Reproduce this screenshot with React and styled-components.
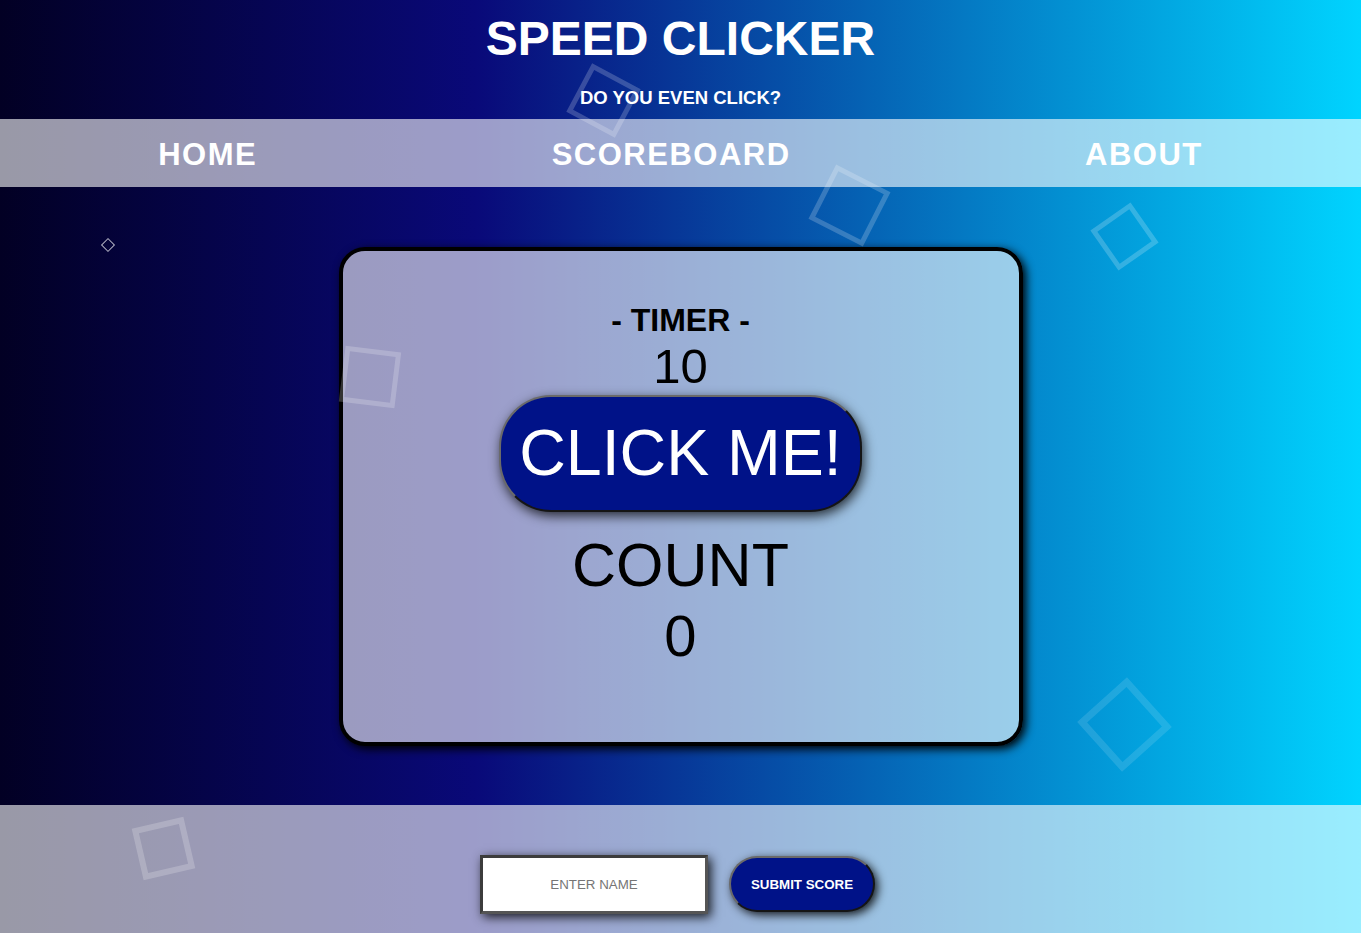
import React from "react";
import styled, { createGlobalStyle } from "styled-components";

const GlobalStyle = createGlobalStyle`
  html, body {
    margin: 0;
    padding: 0;
    overflow: hidden;
  }
  body {
    font-family: "Liberation Sans", Arial, sans-serif;
    background: linear-gradient(90deg, rgb(2, 0, 36) 0%, rgb(9, 9, 121) 35%, rgb(0, 212, 255) 100%);
    min-height: 100vh;
  }
`;

const Page = styled.div`
  position: relative;
  width: 100%;
  height: 933px;
  display: flex;
  flex-direction: column;
`;

const Header = styled.header`
  height: 119px;
  box-sizing: border-box;
  padding-top: 11px;
  display: flex;
  flex-direction: column;
  align-items: center;
  color: #fff;
`;

const Title = styled.h1`
  margin: 0;
  font-size: 48px;
  font-weight: 700;
  line-height: 55px;
`;

const Tagline = styled.h3`
  margin: 21px 0 0;
  font-size: 18.5px;
  font-weight: 700;
  line-height: 21px;
`;

const Nav = styled.nav`
  height: 68px;
  box-sizing: border-box;
  padding: 3px 11px 0;
  background: rgba(255, 255, 255, 0.6);
  display: flex;
  justify-content: space-around;
  align-items: center;
`;

const NavLink = styled.a`
  color: #fff;
  font-size: 31px;
  font-weight: 700;
  letter-spacing: 1.5px;
  text-decoration: none;
  cursor: pointer;
`;

const Main = styled.main`
  height: 618px;
  display: flex;
  justify-content: center;
  align-items: center;
`;

const Card = styled.section`
  width: 684px;
  height: 499px;
  box-sizing: border-box;
  border: 4px solid #000;
  border-radius: 26px;
  background: rgba(255, 255, 255, 0.6);
  box-shadow: 3px 3px 10px #000;
  padding-top: 51px;
  display: flex;
  flex-direction: column;
  align-items: center;
  color: #000;
`;

const TimerLabel = styled.div`
  font-size: 32px;
  font-weight: 700;
  line-height: 37px;
`;

const TimerValue = styled.div`
  font-size: 49px;
  line-height: 54px;
`;

const ClickButton = styled.button`
  margin-top: 2px;
  width: 363px;
  height: 117px;
  box-sizing: border-box;
  border: 2px outset #6a6a6a;
  border-radius: 52px;
  background: rgb(0, 18, 136);
  color: #fff;
  font-family: "Liberation Sans", Arial, sans-serif;
  font-size: 64.5px;
  line-height: 1;
  padding: 0;
  box-shadow: 2px 4px 12px rgba(0, 0, 0, 0.75);
  cursor: pointer;
`;

const CountLabel = styled.div`
  margin-top: 19px;
  font-size: 61px;
  line-height: 69px;
`;

const CountValue = styled.div`
  margin-top: 4px;
  font-size: 58px;
  line-height: 64px;
`;

const Footer = styled.footer`
  height: 128px;
  box-sizing: border-box;
  padding: 50px 6px 0 0;
  background: rgba(255, 255, 255, 0.6);
  display: flex;
  justify-content: center;
  align-items: flex-start;
  gap: 21px;
`;

const NameInput = styled.input`
  width: 228px;
  height: 59px;
  box-sizing: border-box;
  border: 3px solid #3c3c3c;
  border-right-color: #555;
  border-bottom-color: #555;
  background: #fff;
  text-align: center;
  font-family: "Liberation Sans", Arial, sans-serif;
  font-size: 13.333px;
  box-shadow: 3px 3px 10px rgba(0, 0, 0, 0.85);
  outline: none;
  &::placeholder {
    color: #757575;
  }
`;

const SubmitButton = styled.button`
  margin-top: 1px;
  width: 146px;
  height: 56px;
  box-sizing: border-box;
  border: 2px outset #6a6a6a;
  border-radius: 28px;
  background: rgb(0, 18, 136);
  color: #fff;
  font-family: "Liberation Sans", Arial, sans-serif;
  font-size: 13.333px;
  font-weight: 700;
  padding: 0;
  box-shadow: 3px 3px 10px rgba(0, 0, 0, 0.85);
  cursor: pointer;
`;

const Decor = styled.div`
  position: absolute;
  inset: 0;
  pointer-events: none;
  overflow: hidden;
`;

const Square = styled.div`
  position: absolute;
  box-sizing: border-box;
  border: ${(p) => p.$bw}px solid rgba(255, 255, 255, ${(p) => p.$alpha});
`;

const squares = [
  { cx: 603, cy: 100, s: 55, r: 28, bw: 5, a: 0.2 },
  { cx: 849, cy: 205, s: 61, r: 27, bw: 5, a: 0.2 },
  { cx: 1124, cy: 236, s: 49, r: 55, bw: 5, a: 0.2 },
  { cx: 108, cy: 245, s: 10, r: 45, bw: 1, a: 0.7 },
  { cx: 370, cy: 377, s: 56, r: 7, bw: 5, a: 0.2 },
  { cx: 1124, cy: 724, s: 67, r: 48, bw: 7, a: 0.12 },
  { cx: 163, cy: 848, s: 53, r: -13, bw: 6, a: 0.2 },
];

export default function App() {
  return (
    <>
      <GlobalStyle />
      <Page>
        <Header>
          <Title>SPEED CLICKER</Title>
          <Tagline>DO YOU EVEN CLICK?</Tagline>
        </Header>
        <Nav>
          <NavLink>HOME</NavLink>
          <NavLink>SCOREBOARD</NavLink>
          <NavLink>ABOUT</NavLink>
        </Nav>
        <Main>
          <Card>
            <TimerLabel>- TIMER -</TimerLabel>
            <TimerValue>10</TimerValue>
            <ClickButton>CLICK ME!</ClickButton>
            <CountLabel>COUNT</CountLabel>
            <CountValue>0</CountValue>
          </Card>
        </Main>
        <Footer>
          <NameInput placeholder="ENTER NAME" />
          <SubmitButton>SUBMIT SCORE</SubmitButton>
        </Footer>
        <Decor>
          {squares.map((q, i) => (
            <Square
              key={i}
              $bw={q.bw}
              $alpha={q.a}
              style={{
                left: q.cx - q.s / 2,
                top: q.cy - q.s / 2,
                width: q.s,
                height: q.s,
                transform: `rotate(${q.r}deg)`,
              }}
            />
          ))}
        </Decor>
      </Page>
    </>
  );
}
